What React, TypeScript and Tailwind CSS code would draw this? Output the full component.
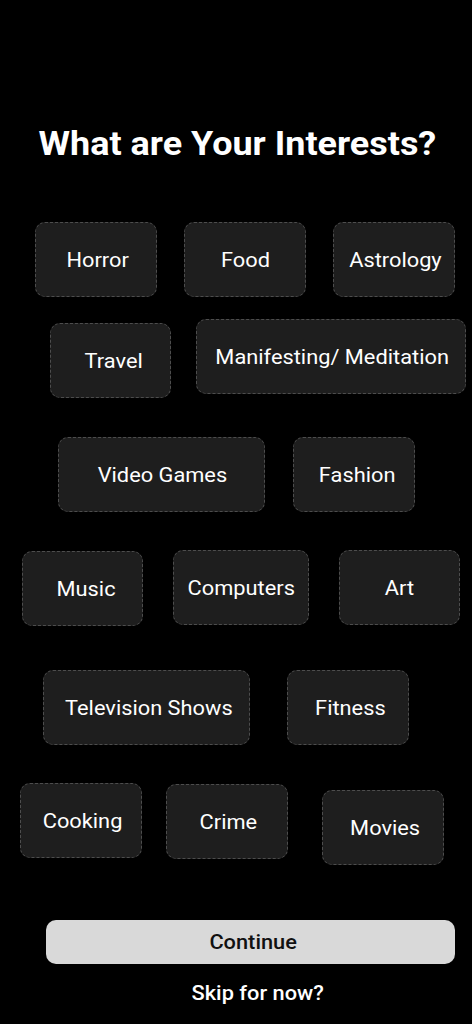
import React from 'react';

type Chip = { label: string; ml: number; w: number; mt?: number; tx?: string };

const rows: { mt: string; chips: Chip[] }[] = [
  {
    mt: 'mt-[62px]',
    chips: [
      { label: 'Horror', ml: 35, w: 122, tx: 'pl-[3px]' },
      { label: 'Food', ml: 27, w: 122 },
      { label: 'Astrology', ml: 27, w: 122, tx: 'pl-[3px]' },
    ],
  },
  {
    mt: 'mt-[22px]',
    chips: [
      { label: 'Travel', ml: 50, w: 121, mt: 4, tx: 'pl-[7px]' },
      { label: 'Manifesting/ Meditation', ml: 25, w: 270, tx: 'pl-[2px]' },
    ],
  },
  {
    mt: 'mt-[39px]',
    chips: [
      { label: 'Video Games', ml: 58, w: 207, tx: 'pl-[2px]' },
      { label: 'Fashion', ml: 28, w: 122, tx: 'pl-[6px]' },
    ],
  },
  {
    mt: 'mt-[38px]',
    chips: [
      { label: 'Music', ml: 22, w: 121, mt: 1, tx: 'pl-[8px]' },
      { label: 'Computers', ml: 30, w: 136 },
      { label: 'Art', ml: 30, w: 121 },
    ],
  },
  {
    mt: 'mt-[44px]',
    chips: [
      { label: 'Television Shows', ml: 43, w: 207, tx: 'pl-[4px]' },
      { label: 'Fitness', ml: 37, w: 122, tx: 'pl-[4px]' },
    ],
  },
  {
    mt: 'mt-[38px]',
    chips: [
      { label: 'Cooking', ml: 20, w: 122, tx: 'pl-[3px]' },
      { label: 'Crime', ml: 24, w: 122, mt: 1, tx: 'pl-[3px]' },
      { label: 'Movies', ml: 34, w: 122, mt: 7, tx: 'pl-[4px]' },
    ],
  },
];

export default function App() {
  return (
    <div className="w-[472px] h-[1024px] bg-black overflow-hidden flex flex-col" style={{ fontFamily: 'Roboto, "Noto Sans", sans-serif' }}>
      <h1 className="pt-[127px] pl-[3px] text-center text-white font-bold text-[33px] leading-[33px]">
        <span className="inline-block scale-x-[1.09] whitespace-nowrap">What are Your Interests?</span>
      </h1>

      {rows.map((row, i) => (
        <div key={i} className={`flex items-start ${row.mt}`}>
          {row.chips.map((c) => (
            <div
              key={c.label}
              style={{ marginLeft: c.ml, width: c.w, marginTop: c.mt ?? 0 }}
              className={`h-[75px] shrink-0 flex items-center justify-center rounded-[10px] border border-dashed border-[#4d4d4d] bg-[#1e1e1e] text-white text-[20px] leading-none whitespace-nowrap ${c.tx ?? ''}`}
            >
              <span className="inline-block scale-x-[1.09]">{c.label}</span>
            </div>
          ))}
        </div>
      ))}

      <button className="mt-[55px] ml-[46px] w-[409px] h-[44px] pl-[6px] rounded-[10px] bg-[#d9d9d9] text-[#111] text-[20px] font-medium leading-none">
        <span className="inline-block scale-x-[1.09]">Continue</span>
      </button>
      <div className="mt-[19px] pl-[44px] text-center text-white text-[20px] font-medium leading-none">
        <span className="inline-block scale-x-[1.09]">Skip for now?</span>
      </div>
    </div>
  );
}
